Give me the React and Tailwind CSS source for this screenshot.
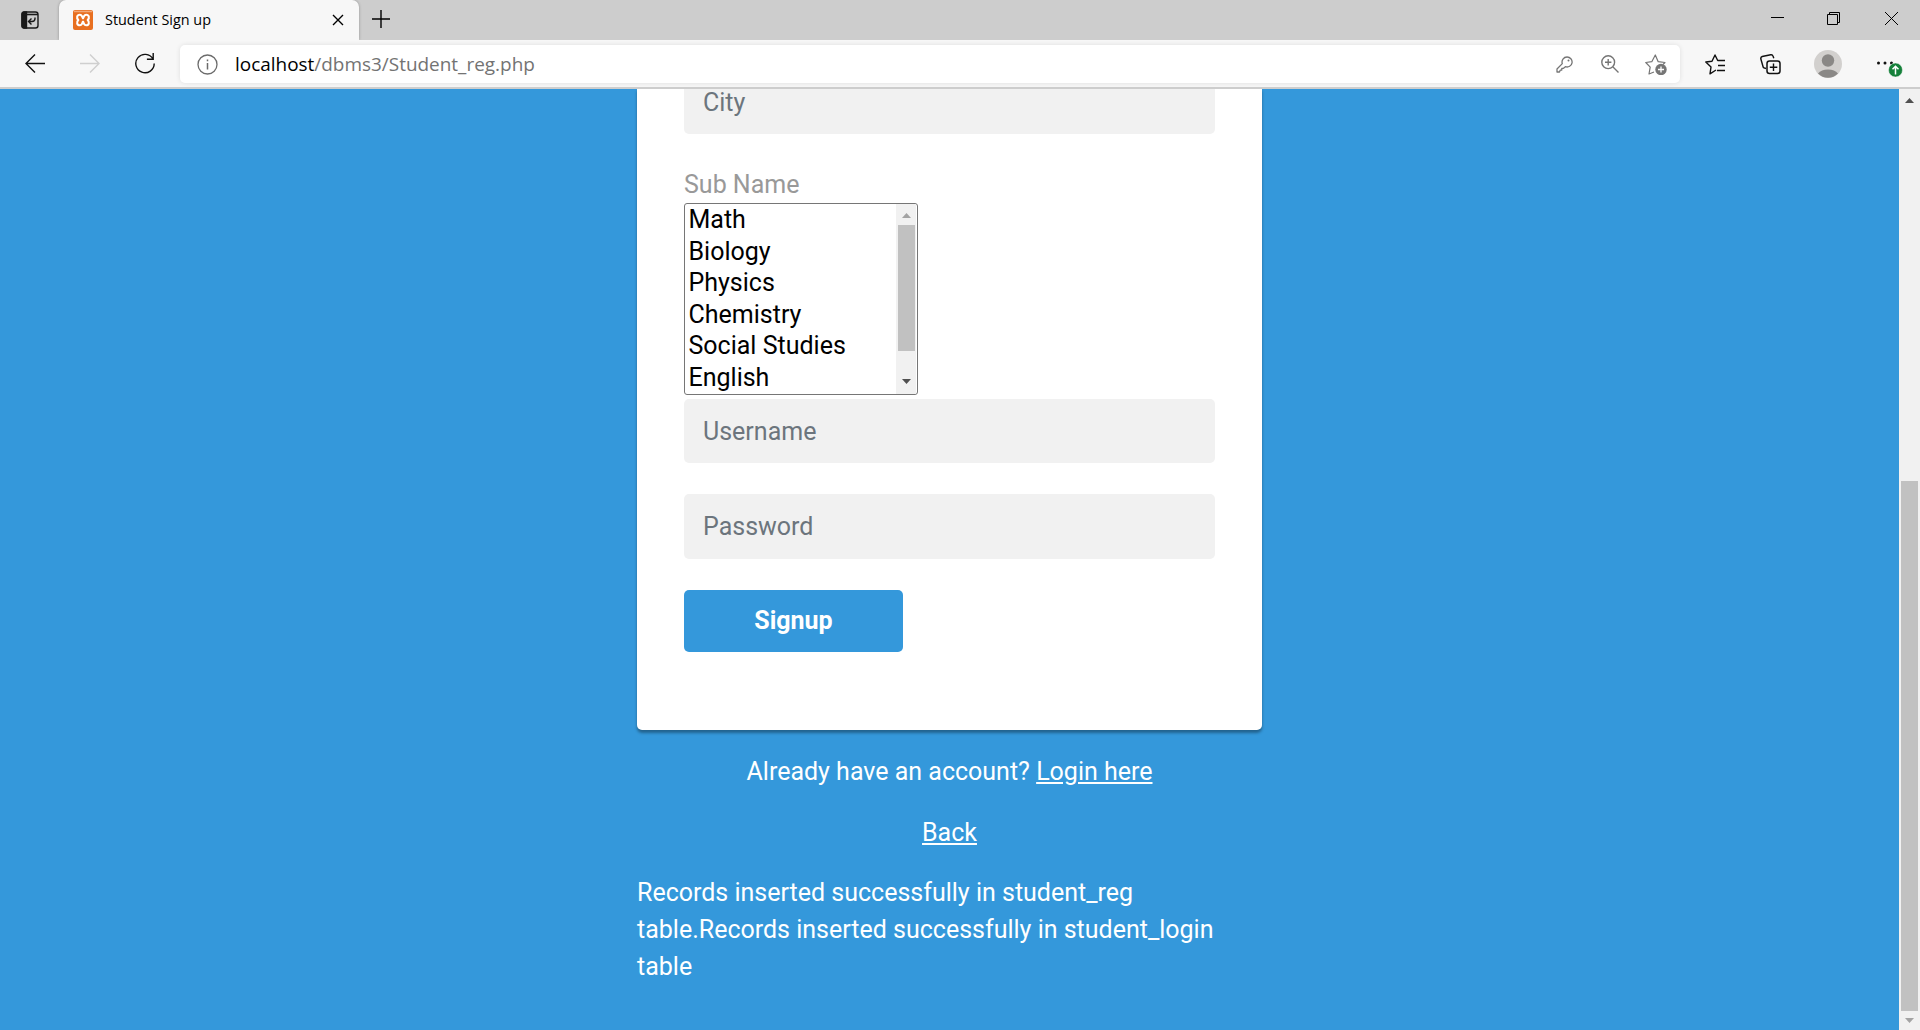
import React from "react";

const Svg = ({ w, h, children, className = "" }) => (
  <svg width={w} height={h} viewBox={`0 0 ${w} ${h}`} fill="none" stroke="currentColor" strokeWidth="1.4" className={`block shrink-0 ${className}`}>
    {children}
  </svg>
);

function TabStrip() {
  return (
    <div className="flex h-10 shrink-0 bg-[#cdcdcd] text-black">
      <div className="flex w-[59px] items-center justify-center">
        <Svg w={18} h={18} className="text-[#1a1a1a]">
          <path d="M3 1h2.500v16H3q-2 0-2-2V3q0-2 2-2z" fill="currentColor" />
          <rect x="1" y="1" width="16" height="16" rx="2.500" />
          <path d="M1 3.500h16" strokeWidth="1.600" />
          <path d="M14 6.500v1q0 3-3 3H7.500M10.500 7.500l-3 3 3 3" />
        </Svg>
      </div>
      <div className="relative z-10 flex w-[300px] items-center rounded-t-[7px] bg-[#f7f7f7] pl-[14px] pr-[15px] shadow-[0_0_3px_rgba(0,0,0,0.3)]">
        <Svg w={20} h={20}>
          <rect width="20" height="20" rx="2" fill="#e86f20" stroke="none" />
          <path d="M1 1.500h18" stroke="#f3a878" strokeWidth="1.500" />
          <path d="M10 8.300C9.300 7.800 9.300 4.700 6.800 4.700 4 4.700 3.200 8 5.300 10 3.200 12 4 15.300 6.800 15.300c2.500 0 2.500-3.100 3.200-3.600.7.500.7 3.600 3.200 3.600 2.800 0 3.600-3.300 1.500-5.300 2.100-2 1.300-5.300-1.500-5.300-2.500 0-2.500 3.100-3.200 3.600z" stroke="#fff" strokeWidth="2.100" strokeLinejoin="round" />
        </Svg>
        <span className="ml-3 whitespace-nowrap font-['Open_Sans',sans-serif] text-[14.4px]">Student Sign up</span>
        <Svg w={12} h={12} className="ml-auto"><path d="M1 1l10 10M11 1L1 11" /></Svg>
      </div>
      <div className="flex w-[43px] items-center justify-center pb-0.5">
        <Svg w={18} h={18}><path d="M9 0v18M0 9h18" /></Svg>
      </div>
      <div className="ml-auto flex h-[37px] items-center pr-[22px]">
        <Svg w={13} h={13}><path d="M0 5.500h13" strokeWidth="1" /></Svg>
        <Svg w={13} h={13} className="ml-[43px]"><path d="M.5 2.500h10v10H.5zM2.500 2.500v-2h10v10h-2" strokeWidth="1" /></Svg>
        <Svg w={13} h={13} className="ml-[45px]"><path d="M0 0l13 13M13 0L0 13" strokeWidth="1" /></Svg>
      </div>
    </div>
  );
}

function Toolbar() {
  return (
    <div className="relative z-20 flex h-[49px] shrink-0 items-start border-b-2 border-[#cdcdcd] bg-[#f7f7f7] pt-[5px] text-[#111]">
      <div className="flex h-[37px] w-[180px] items-center pl-[25px]">
        <Svg w={20} h={20}><path d="M20 9.500H1M10 .5l-9 9 9 9" /></Svg>
        <Svg w={20} h={20} className="ml-[35px] text-[#cfcfcf]"><path d="M0 9.500h19M10 .5l9 9-9 9" /></Svg>
        <Svg w={21} h={21} className="ml-[35px]"><path d="M18 6A9.200 9.200 0 1 0 19.200 10.500M18.200 0v6.300h-6.300" /></Svg>
      </div>
      <div className="flex h-[38px] w-[1500px] items-center rounded-[5px] bg-white pl-[17px] pr-[13px] shadow-[0_0_5px_rgba(0,0,0,0.1)]">
        <Svg w={21} h={21} className="text-[#6b6b6b]">
          <circle cx="10.500" cy="10.500" r="9.500" strokeWidth="1.300" />
          <path d="M10.500 9v6.500M10.500 5.500v1.700" strokeWidth="1.500" />
        </Svg>
        <span className="ml-[17px] whitespace-nowrap font-['Open_Sans',sans-serif] text-[18.95px] text-[#737373]">
          <span className="text-black">localhost</span>/dbms3/Student_reg.php
        </span>
        <div className="ml-auto flex items-center text-[#757575]">
          <Svg w={17} h={17}>
            <path d="M11 1a5 5 0 1 1-1.600 9.700L7.500 12.300H5.800v1.800H4.200L3.500 16H1v-3l5.300-5.400A5 5 0 0 1 11 1z" strokeLinejoin="round" strokeWidth="1.300" />
            <circle cx="12.500" cy="4.500" r="1" fill="currentColor" stroke="none" />
          </Svg>
          <Svg w={18} h={18} className="ml-7"><circle cx="7.200" cy="7.200" r="6.400" /><path d="M12 12l5.500 5.500M7.200 4v6.400M4 7.200h6.400" /></Svg>
          <Svg w={22} h={21} className="ml-[26px]">
            <path d="M9 18l-5 2 1.200-6.800L.8 8.500l6-.8L10.300 1l2.900 6.700 6.800.8-2 2" strokeWidth="1.200" strokeLinejoin="round" />
            <circle cx="16" cy="15.500" r="5.700" fill="currentColor" stroke="none" />
            <path d="M16 12.500v6M13 15.500h6" stroke="#fff" strokeWidth="1.300" />
          </Svg>
        </div>
      </div>
      <div className="flex h-[38px] flex-1 items-center pl-[25px]">
        <Svg w={21} h={21}>
          <path d="M11 16l-6 3.800L6 13 .8 8l6.200-.8L10 1l2.700 5.500H20M13 11.500h7M12 16.500h8" strokeLinejoin="round" />
        </Svg>
        <Svg w={21} h={21} className="ml-[34px]">
          <rect x="7" y="7" width="13" height="12.500" rx="2.500" strokeWidth="1.500" />
          <path d="M13.500 9.500V17M9.800 13.300h7.500M6 14.500l-2-.7Q3.200 13.500 3 12.500L.8 4.800Q.5 3 2.200 2.500L10.700.8q1.800-.3 2.300 1.200l.8 2.200" strokeWidth="1.400" />
        </Svg>
        <Svg w={28} h={28} className="ml-[33px]">
          <circle cx="14" cy="14" r="14" fill="#d2d0ce" stroke="none" />
          <circle cx="14" cy="10.500" r="6.200" fill="#8a8886" stroke="none" />
          <path d="M4 23.500a11.500 8 0 0 1 20 0A14 14 0 0 1 4 23.500z" fill="#8a8886" stroke="none" />
        </Svg>
        <Svg w={27} h={21} className="ml-[34px] mt-[7px]">
          <g fill="currentColor" stroke="none">
            <circle cx="2.500" cy="6" r="1.500" /><circle cx="9" cy="6" r="1.500" /><circle cx="15.500" cy="6" r="1.500" />
          </g>
          <circle cx="19.500" cy="13" r="7" fill="#15803a" stroke="#f7f7f7" strokeWidth="0.500" />
          <path d="M19.500 17.500V9.500M16.500 12.200l3-3 3 3" stroke="#fff" strokeWidth="1.500" />
        </Svg>
      </div>
    </div>
  );
}

const Arrow = ({ down, className }) => (
  <svg width="9" height="5" viewBox="0 0 9 5" fill="currentColor" className={`block shrink-0 ${className}`}>
    <path d={down ? "M0 0h9L4.500 5z" : "M4.500 0L9 5H0z"} />
  </svg>
);

const Field = ({ children, className }) => (
  <div className={`flex shrink-0 bg-[#f1f1f1] px-[19px] text-[#6c757d] ${className}`}>{children}</div>
);

const subjects = ["Math", "Biology", "Physics", "Chemistry", "Social Studies", "English"];

function SubjectList() {
  return (
    <div className="flex h-[192px] w-[234px] shrink-0 overflow-hidden rounded-[3px] border border-[#767676] bg-white text-black">
      <div className="flex-1 pl-[3.5px]">
        {subjects.map((s) => (
          <div key={s} className="h-[31.5px] leading-[31.5px]">{s}</div>
        ))}
      </div>
      <div className="mr-px flex w-5 flex-col items-center bg-[#f1f1f1] pb-[10px] pt-[9px]">
        <Arrow className="text-[#a3a3a3]" />
        <div className="mt-[7px] h-[126px] w-[17px] bg-[#c1c1c1]" />
        <Arrow down className="mt-auto text-[#505050]" />
      </div>
    </div>
  );
}

export default function App() {
  return (
    <div className="flex h-[1030px] w-full flex-col overflow-hidden font-[Roboto,sans-serif] text-[25px]">
      <TabStrip />
      <Toolbar />
      <div className="flex min-h-0 flex-1 bg-[#3498db]">
        <div className="flex min-w-0 flex-1 flex-col items-center overflow-hidden">
          <div className="flex h-[641px] w-[625px] shrink-0 flex-col rounded-b-[5px] bg-white px-[47px] shadow-[0_2.5px_3px_rgba(0,0,0,0.35)]">
            <Field className="h-[45px] items-start rounded-b-[5px] leading-[28px]">City</Field>
            <div className="mt-[32px] h-[37px] shrink-0 leading-[38px] text-[#999]">Sub Name</div>
            <SubjectList />
            <Field className="mt-1 h-16 items-center rounded-[5px] pt-px">Username</Field>
            <Field className="mt-[31px] h-[65px] items-center rounded-[5px]">Password</Field>
            <button className="mt-[31px] h-[62px] w-[219px] shrink-0 rounded-[5px] bg-[#3498db] font-bold text-white">Signup</button>
          </div>
          <div className="w-[625px] text-white">
            <p className="mt-[23px] text-center leading-[37px]">Already have an account? <a className="underline">Login here</a></p>
            <p className="mt-6 text-center leading-[37px]"><a className="underline">Back</a></p>
            <p className="mt-[23px] leading-[37px]">Records inserted successfully in student_reg table.Records inserted successfully in student_login table</p>
          </div>
        </div>
        <div className="flex w-[21px] shrink-0 flex-col items-center bg-[#f1f1f1] pb-[7px] pt-[9px]">
          <Arrow className="text-[#505050]" />
          <div className="mt-[378px] h-[530px] w-[17px] bg-[#c1c1c1]" />
          <Arrow down className="mt-auto text-[#a3a3a3]" />
        </div>
      </div>
    </div>
  );
}
